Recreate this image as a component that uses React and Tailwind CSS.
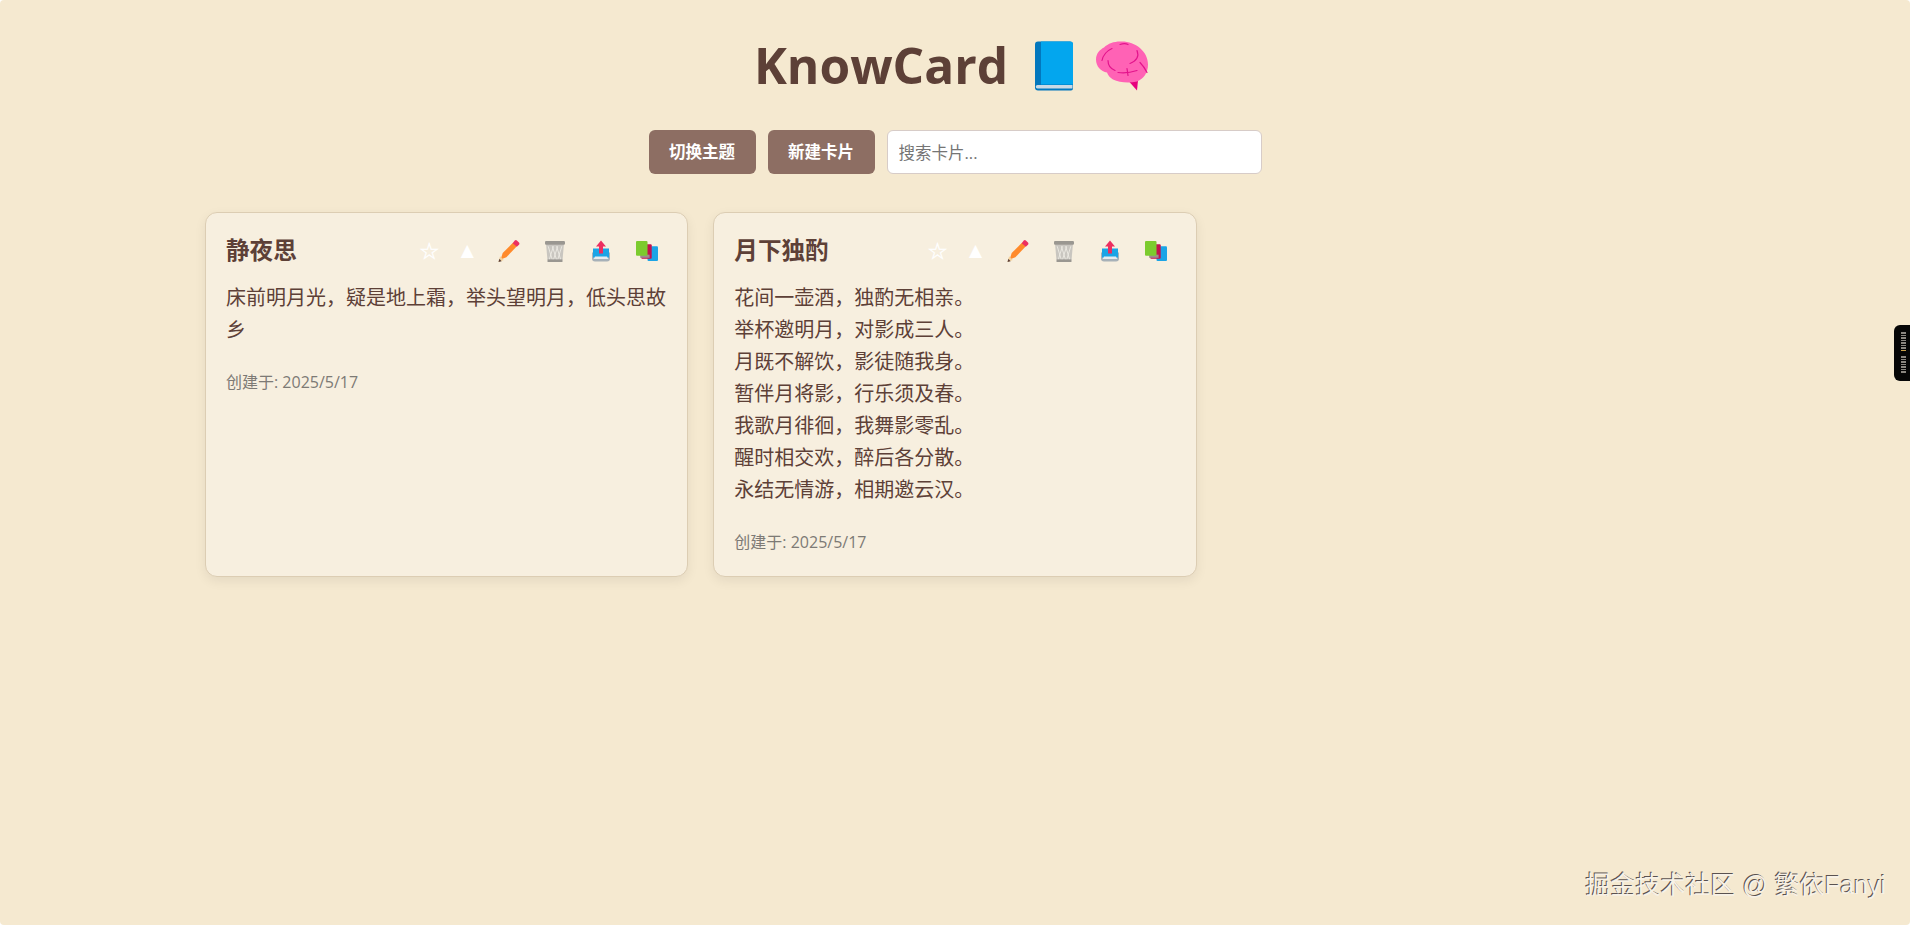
const FONT = '"Open Sans", "Noto Sans CJK SC", sans-serif';

const POEMS = [
  {
    title: '静夜思',
    lines: ['床前明月光，疑是地上霜，举头望明月，低头思故乡'],
  },
  {
    title: '月下独酌',
    lines: [
      '花间一壶酒，独酌无相亲。',
      '举杯邀明月，对影成三人。',
      '月既不解饮，影徒随我身。',
      '暂伴月将影，行乐须及春。',
      '我歌月徘徊，我舞影零乱。',
      '醒时相交欢，醉后各分散。',
      '永结无情游，相期邀云汉。',
    ],
  },
];

function BookEmoji() {
  return (
    <svg width="38" height="50" viewBox="0 0 38 49">
      <path d="M3 0h32a3 3 0 0 1 3 3v44a2 2 0 0 1-2 2H3a3 3 0 0 1-3-3V3a3 3 0 0 1 3-3z" fill="#0277bd" />
      <path d="M6 0h29a3 3 0 0 1 3 3v40H6z" fill="#03a6ee" />
      <path d="M2.500 43.500h35v3.500H2.500a1.750 1.750 0 0 1 0-3.500z" fill="#c8d9e6" />
    </svg>
  );
}

function BrainEmoji() {
  return (
    <svg width="52" height="50" viewBox="0 0 52 49">
      <path d="M33 40l9-1-1 10z" fill="#e6007e" />
      <path d="M24 0C38-1 52 9 52 23c0 8-4 14-11 17-8 2-18 1-24-2-3-2-5-4-6-7C5 30 0 25 0 18 0 12 4 8 8 6c4-4 10-6 16-6z" fill="#ff62b5" />
      <g fill="none" stroke="#e3148c" strokeWidth="1.200" strokeLinecap="round">
        <path d="M24 3c3-1 6-1 8 0" />
        <path d="M6 19c1-5 5-10 10-12" />
        <path d="M12 19c0 4 2 8 7 10" />
        <path d="M41 9c2 5 0 10-7 13" />
        <path d="M22 31c6 1 13 0 19-2" />
        <path d="M31 27l1 7" />
        <path d="M44 21c3 3 5 6 7 10" />
      </g>
    </svg>
  );
}

function PencilEmoji() {
  return (
    <svg width="22" height="22" viewBox="0 0 20 21">
      <path d="M4 12.500L14 2.500l3.500 3.500-10 10.500-5.500 2z" fill="#ff8a2b" />
      <path d="M1.500 15.500l3.500 3.500-5 2z" fill="#f6d29b" />
      <path d="M0 21l.8-3 2.200 2.200z" fill="#5d4037" />
      <path d="M13.500 3l2-2.500a1.500 1.500 0 0 1 2 0l2 2a1.500 1.500 0 0 1 0 2L17.500 6.500z" fill="#ec2f60" />
    </svg>
  );
}

function TrashEmoji() {
  return (
    <svg width="20" height="21" viewBox="0 0 19 20">
      <path d="M1 3h17l-1.500 17h-14z" fill="#c9c6c0" />
      <g stroke="#f0ede6" strokeWidth="0.800" fill="none">
        <path d="M3 5l4 13M7 5l4 13M11 5l4 13M16 5l-4 13M12 5l-4 13M8 5l-4 13" />
      </g>
      <rect x="0" y="0" width="19" height="3.500" rx="1" fill="#9a9791" />
      <rect x="2.500" y="17.500" width="14" height="2.500" fill="#9a9791" />
    </svg>
  );
}

function OutboxEmoji() {
  return (
    <svg width="18" height="22" viewBox="0 0 18 21">
      <path d="M0 12h18v6a3 3 0 0 1-3 3H3a3 3 0 0 1-3-3z" fill="#a7b1b8" />
      <path d="M1 8h16v8l-1 2H2l-1-2z" fill="#1ba4e6" />
      <path d="M3 16h12l1.500 2.500h-15z" fill="#e6ebee" />
      <path d="M9 0l5 6h-3v7H7V6H4z" fill="#ec2f60" />
    </svg>
  );
}

function BooksEmoji() {
  return (
    <svg width="22" height="20" viewBox="0 0 21 19">
      <rect x="11" y="5" width="10" height="14" rx="1" fill="#1ba4e6" />
      <rect x="5" y="3" width="10" height="14" rx="1" fill="#c2124f" />
      <rect x="4" y="13" width="9" height="3" fill="#9d8a8f" />
      <rect x="0" y="0" width="11" height="14" rx="1" fill="#7ccb2e" />
    </svg>
  );
}

function PoemCard({ poem }) {
  return (
    <div className="h-[365px] rounded-xl border border-[#dccdb3] bg-[#f7efdf] p-5 shadow-[0_4px_12px_rgba(0,0,0,0.07)]">
      <div className="flex h-[36px] items-center justify-between">
        <h3 className="text-[23.600px] font-bold text-[#5d4037]">{poem.title}</h3>
        <div className="mr-[1px] flex items-center gap-2">
          <button className="flex h-[30px] w-[30px] items-center justify-center font-['DejaVu_Sans'] text-[23px] font-bold text-white [-webkit-text-stroke:0.4px_white]">☆</button>
          <button className="flex h-[30px] w-[30px] items-center justify-center font-['DejaVu_Sans'] text-[17px] text-white">▲</button>
          <button className="flex h-[30px] w-[38px] items-center justify-center"><PencilEmoji /></button>
          <button className="flex h-[30px] w-[38px] items-center justify-center"><TrashEmoji /></button>
          <button className="flex h-[30px] w-[38px] items-center justify-center"><OutboxEmoji /></button>
          <button className="flex h-[30px] w-[38px] items-center justify-center"><BooksEmoji /></button>
        </div>
      </div>
      <div className="mt-[13px] text-[20px] leading-8 text-[#5d4037]">
        {poem.lines.map((line, i) => (
          <div key={i}>{line}</div>
        ))}
      </div>
      <p className="mt-[24px] text-[16px] leading-6 text-[#7d7a75]">创建于: 2025/5/17</p>
    </div>
  );
}

export default function App() {
  return (
    <div className="bg-white">
      <div
        className="relative h-[925px] overflow-hidden rounded-[4px] bg-[#f5e9d0]"
        style={{ fontFamily: FONT }}
      >
        <div className="flex justify-center pt-[31px] pr-[8px]">
          <h1 className="flex h-[68px] items-center text-[49.600px] font-bold leading-[68px] text-[#5d4037]">
            KnowCard
            <span className="ml-[27px] mt-[2px]"><BookEmoji /></span>
            <span className="ml-[23px] mt-[2px]"><BrainEmoji /></span>
          </h1>
        </div>

        <div className="mt-[31px] flex justify-center gap-3">
          <button className="h-11 w-[107px] rounded-md bg-[#8d6e63] text-[16.500px] font-semibold text-white">切换主题</button>
          <button className="h-11 w-[107px] rounded-md bg-[#8d6e63] text-[16.500px] font-semibold text-white">新建卡片</button>
          <input
            placeholder="搜索卡片..."
            className="h-11 w-[375px] rounded-md border border-[#d7ccc8] bg-white px-[11px] text-[16.500px] text-[#5d4037] placeholder:text-[#757575]"
          />
        </div>

        <div className="mx-auto mt-[38px] grid w-[1500px] grid-cols-3 gap-[25px]">
          {POEMS.map((poem) => (
            <PoemCard key={poem.title} poem={poem} />
          ))}
        </div>

        {/* scroll widget */}
        <div className="absolute right-0 top-[325px] flex h-[56px] w-[16px] flex-col items-end gap-[1px] rounded-l-md bg-[#060606] pr-[4px] pt-[7px]">
          {Array.from({ length: 15 }, (_, i) => (
            <div key={i} className={i === 7 ? 'mb-[4px] h-[1.500px] w-[5px] bg-[#c9a04a]' : 'h-[1.500px] w-[5px] bg-[#8a8680]'} />
          ))}
        </div>

        <div className="absolute right-[24px] top-[870px] font-['Liberation_Sans','Noto_Sans_CJK_SC',sans-serif] text-[25px] leading-[30px] text-[#f7f1e6] [text-shadow:-1px_-1px_0_#5a5250]">
          掘金技术社区 @ 繁依Fanyi
        </div>
      </div>
    </div>
  );
}
